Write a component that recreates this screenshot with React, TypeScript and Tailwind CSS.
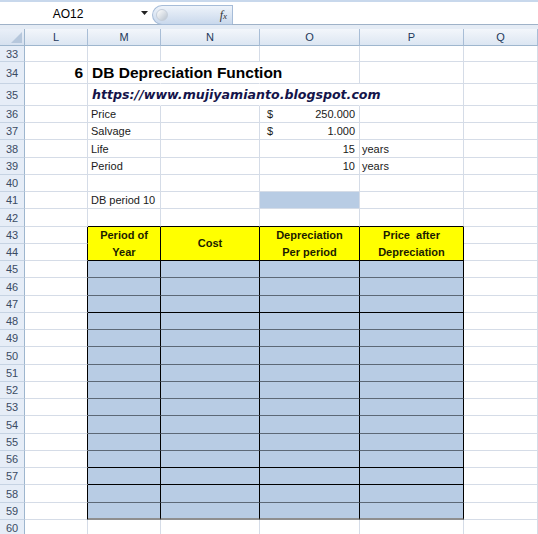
import React from 'react';

const W = [25, 63, 73, 99, 100, 104, 74];
const GRID = 'border-[#d5dce7]';
const font = { fontFamily: '"Liberation Sans", Arial, sans-serif' };

type CellSpec = { content?: React.ReactNode; cls?: string };

const pattern = [17, 17, 18, 17];

const blackAfter = [47, 56, 57];

function RowHead({ n, h }: { n: number; h: number }) {
  return (
    <div
      className="shrink-0 flex items-center justify-center bg-[#e6edf7] border-r border-r-[#9eb6ce] border-b border-b-[#c6d3e3] text-[11px] text-[#3a4b63] pt-[1px]"
      style={{ width: W[0], height: h }}
    >
      {n}
    </div>
  );
}

function Row({ n, h, cells }: { n: number; h: number; cells: CellSpec[] }) {
  return (
    <div className="flex">
      <RowHead n={n} h={h} />
      {W.slice(1).map((w, i) => {
        const c = cells[i] || {};
        return (
          <div
            key={i}
            className={`shrink-0 flex items-center overflow-visible whitespace-nowrap border-r border-b pt-[1px] ${GRID} ${c.cls || ''}`}
            style={{ width: w, height: h }}
          >
            {c.content}
          </div>
        );
      })}
    </div>
  );
}

function FormulaBar() {
  return (
    <div className="h-[29px] bg-white border-t-2 border-t-[#c8d8ec] relative">
      <div className="flex h-[23px] border-b border-b-[#9fb2c8]">
        <div className="w-[136px] flex items-center justify-center text-[12px] text-black pt-[1px]">AO12</div>
        <div className="w-[16px] flex items-center justify-center">
          <svg width="7" height="4" viewBox="0 0 7 4">
            <path d="M0 0 L7 0 L3.5 4 Z" fill="#222" />
          </svg>
        </div>
        <div className="w-[80px] mt-[3px] h-[20px] rounded-l-full bg-gradient-to-b from-[#eef3fa] to-[#c9d8ec] border border-[#a6bcd8] border-r-0 flex items-center justify-between pl-[3px] pr-[5px]">
          <div className="w-[12px] h-[12px] rounded-full bg-gradient-to-br from-white to-[#b9c3cf] border border-[#c5ceda]" />
          <span className="text-[12px] italic text-[#333]" style={{ fontFamily: '"Liberation Serif", serif' }}>
            f<span className="text-[9px]">x</span>
          </span>
        </div>
        <div className="flex-1 border-l border-l-[#a6bcd8] mt-[3px]" />
      </div>
      <div className="h-[4px] bg-[#e5ecf5]" />
    </div>
  );
}

function ColHeader() {
  const letters = ['L', 'M', 'N', 'O', 'P', 'Q'];
  return (
    <div className="flex h-[17px]">
      <div
        className="shrink-0 relative bg-gradient-to-b from-[#e9eff8] to-[#d6e1ef] border-r border-b border-[#9eb6ce]"
        style={{ width: W[0] }}
      >
        <svg className="absolute right-[2px] bottom-[2px]" width="11" height="11" viewBox="0 0 11 11">
          <path d="M11 0 L11 11 L0 11 Z" fill="#b6c7dc" />
        </svg>
      </div>
      {letters.map((l, i) => (
        <div
          key={l}
          className="shrink-0 flex items-center justify-center text-[11px] text-[#22385a] bg-gradient-to-b from-[#f3f6fb] to-[#dce6f2] border-r border-r-[#a8bdd6] border-b border-b-[#9eb6ce]"
          style={{ width: W[i + 1] }}
        >
          {l}
        </div>
      ))}
    </div>
  );
}

const txt = 'text-[11px] text-[#1a1a1a] pl-[3px]';

export default function App() {
  const heights: Record<number, number> = {};
  for (let r = 36; r <= 60; r++) heights[r] = pattern[(r - 36) % 4];

  const dataRows = [];
  for (let r = 45; r <= 59; r++) {
    const line =
      r === 59
        ? 'border-b-2 border-b-[#8f8f8f]'
        : blackAfter.includes(r)
        ? 'border-b-black'
        : 'border-b-[#5c6876]';
    const tc = `bg-[#b8cce4] border-r-black ${line}`;
    dataRows.push(
      <Row
        key={r}
        n={r}
        h={heights[r]}
        cells={[{ cls: 'border-r-black' }, { cls: tc }, { cls: tc }, { cls: tc }, { cls: tc }, {}]}
      />
    );
  }

  const hdrCls =
    'shrink-0 flex items-center justify-center text-center bg-[#ffff00] border-r border-b border-black text-[11px] font-bold leading-[17px] text-[#1c1c00]';

  return (
    <div className="w-[538px] h-[534px] overflow-hidden bg-white" style={font}>
      <FormulaBar />
      <ColHeader />
      <Row n={33} h={16} cells={[]} />
      <Row
        n={34}
        h={22}
        cells={[
          { content: <span className="ml-auto pr-[4px] text-[15.5px] font-bold">6</span> },
          { content: <span className="pl-[4px] text-[15.5px] font-bold text-black">DB Depreciation Function</span>, cls: 'border-r-transparent relative z-10' },
          { cls: 'border-r-transparent' },
          {},
        ]}
      />
      <Row
        n={35}
        h={22}
        cells={[
          {},
          {
            content: (
              <span
                className="pl-[4px] text-[12.6px] font-bold italic text-[#14144a]"
                style={{ fontFamily: '"DejaVu Sans", Verdana, sans-serif' }}
              >
                https://www.mujiyamianto.blogspot.com
              </span>
            ),
            cls: 'border-r-transparent relative z-10',
          },
          { cls: 'border-r-transparent' },
          { cls: 'border-r-transparent' },
        ]}
      />
      <Row
        n={36}
        h={heights[36]}
        cells={[
          {},
          { content: <span className={txt}>Price</span> },
          {},
          {
            content: (
              <div className="flex w-full justify-between pl-[7px] pr-[4px] text-[11px] text-[#1a1a1a]">
                <span>$</span>
                <span>250.000</span>
              </div>
            ),
          },
        ]}
      />
      <Row
        n={37}
        h={heights[37]}
        cells={[
          {},
          { content: <span className={txt}>Salvage</span> },
          {},
          {
            content: (
              <div className="flex w-full justify-between pl-[7px] pr-[4px] text-[11px] text-[#1a1a1a]">
                <span>$</span>
                <span>1.000</span>
              </div>
            ),
          },
        ]}
      />
      <Row
        n={38}
        h={heights[38]}
        cells={[
          {},
          { content: <span className={txt}>Life</span> },
          {},
          { content: <span className="ml-auto pr-[4px] text-[11px] text-[#1a1a1a]">15</span> },
          { content: <span className="pl-[2px] text-[11px] text-[#1a1a1a]">years</span> },
        ]}
      />
      <Row
        n={39}
        h={heights[39]}
        cells={[
          {},
          { content: <span className={txt}>Period</span> },
          {},
          { content: <span className="ml-auto pr-[4px] text-[11px] text-[#1a1a1a]">10</span> },
          { content: <span className="pl-[2px] text-[11px] text-[#1a1a1a]">years</span> },
        ]}
      />
      <Row n={40} h={heights[40]} cells={[]} />
      <Row
        n={41}
        h={heights[41]}
        cells={[{}, { content: <span className={txt}>DB period 10</span> }, {}, { cls: 'bg-[#b8cce4]' }]}
      />
      <Row
        n={42}
        h={heights[42]}
        cells={[
          {},
          { cls: 'border-b-black' },
          { cls: 'border-b-black' },
          { cls: 'border-b-black' },
          { cls: 'border-b-black' },
        ]}
      />
      {/* rows 43-44 with merged header cells */}
      <div className="flex">
        <div className="flex flex-col">
          <RowHead n={43} h={heights[43]} />
          <RowHead n={44} h={heights[44]} />
        </div>
        <div className="flex flex-col">
          <div className={`border-r border-r-black border-b ${GRID}`} style={{ width: W[1], height: heights[43] }} />
          <div className={`border-r border-r-black border-b ${GRID}`} style={{ width: W[1], height: heights[44] }} />
        </div>
        <div className={hdrCls} style={{ width: W[2], height: heights[43] + heights[44] }}>
          Period of
          <br />
          Year
        </div>
        <div className={hdrCls} style={{ width: W[3], height: heights[43] + heights[44] }}>
          Cost
        </div>
        <div className={hdrCls} style={{ width: W[4], height: heights[43] + heights[44] }}>
          Depreciation
          <br />
          Per period
        </div>
        <div className={hdrCls} style={{ width: W[5], height: heights[43] + heights[44] }}>
          Price&nbsp; after
          <br />
          Depreciation
        </div>
        <div className="flex flex-col">
          <div className={`border-r border-b ${GRID}`} style={{ width: W[6], height: heights[43] }} />
          <div className={`border-r border-b ${GRID}`} style={{ width: W[6], height: heights[44] }} />
        </div>
      </div>
      {dataRows}
      <Row n={60} h={heights[60]} cells={[]} />
    </div>
  );
}
